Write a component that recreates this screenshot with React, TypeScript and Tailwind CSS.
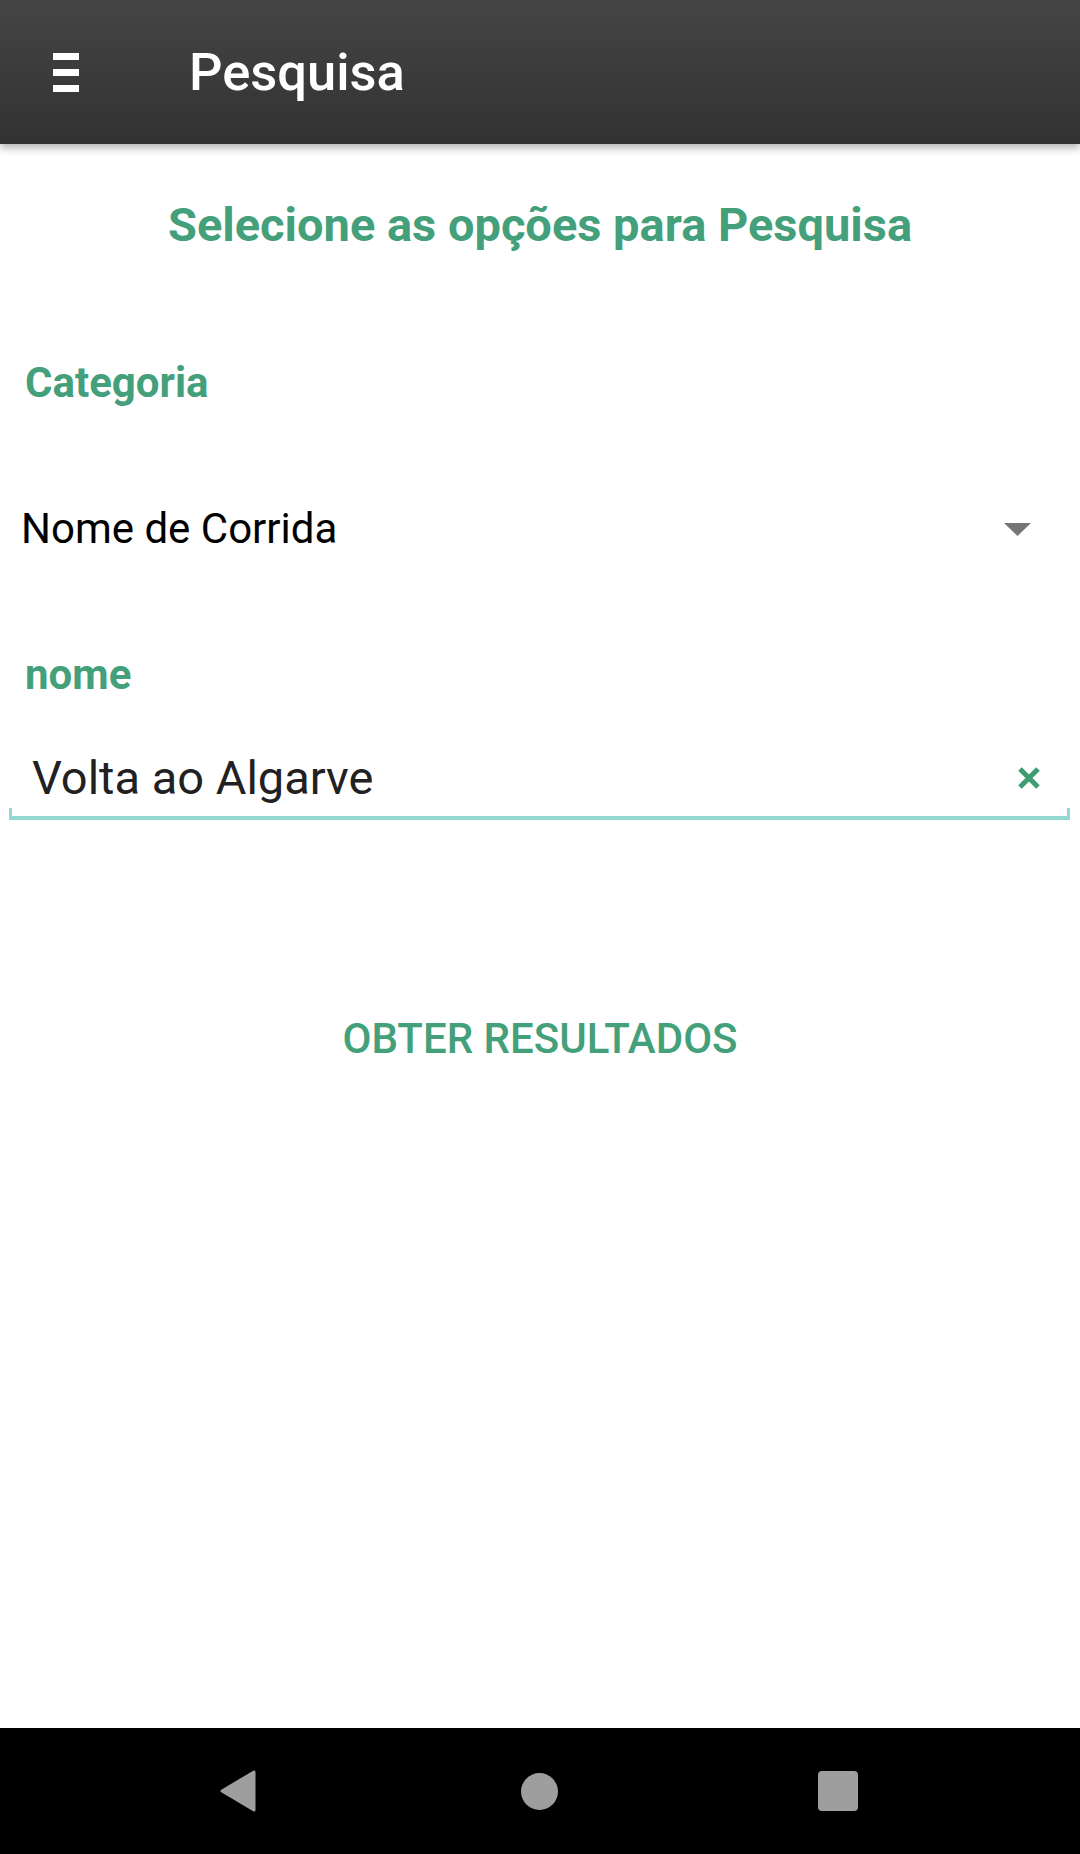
import React from "react";

const green = "text-[#44a07b]";

export default function App() {
  return (
    <div className="flex h-[1854px] w-[1080px] flex-col bg-white font-['Roboto',sans-serif]">
      {/* toolbar */}
      <header className="relative z-10 flex h-[144px] shrink-0 items-start bg-gradient-to-b from-[#454545] to-[#323232] shadow-[0_4px_8px_rgba(0,0,0,0.3)]">
        <div className="ml-[53px] mt-[53px] flex flex-col gap-[9px]">
          <span className="block h-[7px] w-[26px] bg-white" />
          <span className="block h-[7px] w-[26px] bg-white" />
          <span className="block h-[7px] w-[26px] bg-white" />
        </div>
        <h1 className="ml-[110px] mt-[46px] text-[52.5px] font-medium leading-none text-white">Pesquisa</h1>
      </header>

      <main className="flex flex-1 flex-col">
        <h2 className={`mt-[57px] text-center text-[47px] font-bold leading-none ${green}`}>
          Selecione as opções para Pesquisa
        </h2>

        <p className={`ml-[25px] mt-[114px] text-[42px] font-bold leading-none ${green}`}>Categoria</p>

        {/* spinner */}
        <div className="mt-[104px] flex items-center justify-between pl-[21px] pr-[49px]">
          <span className="text-[42px] leading-none text-black">Nome de Corrida</span>
          <svg width="27" height="13" viewBox="0 0 27 13">
            <path d="M0 0 H27 L13.5 13 Z" fill="#757575" />
          </svg>
        </div>

        <p className={`ml-[25px] mt-[104px] text-[42px] font-bold leading-none ${green}`}>nome</p>

        {/* text field */}
        <div className="mt-[58px] flex items-center justify-between pl-[32px] pr-[39px]">
          <span className="text-[47px] leading-none text-[#212121]">Volta ao Algarve</span>
          <svg width="24" height="22" viewBox="0 0 24 22">
            <path d="M3 2 L21 20 M21 2 L3 20" stroke="#3f9c72" strokeWidth="5" strokeLinecap="butt" />
          </svg>
        </div>
        <div className="ml-[9px] mr-[10px] mt-[7px] h-[12px] border-x-[3px] border-b-[4px] border-[#94d8d2]" />

        <button className={`mt-[198px] self-center text-[42px] font-medium uppercase leading-none ${green}`}>
          Obter resultados
        </button>
      </main>

      {/* system navigation */}
      <nav className="flex h-[126px] shrink-0 items-center bg-black pl-[220px]">
        <svg width="36" height="42" viewBox="0 0 36 42">
          <path d="M34 2 V40 L2 21 Z" fill="#9e9e9e" stroke="#9e9e9e" strokeWidth="3" strokeLinejoin="round" />
        </svg>
        <span className="ml-[265px] block h-[37px] w-[37px] rounded-full bg-[#9e9e9e]" />
        <span className="ml-[260px] block h-[40px] w-[40px] rounded-[4px] bg-[#9e9e9e]" />
      </nav>
    </div>
  );
}
